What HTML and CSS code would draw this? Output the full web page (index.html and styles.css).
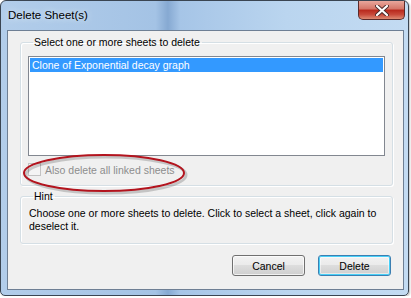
FILE: index.html
```html
<!DOCTYPE html>
<html lang="en">
<head>
    <meta charset="UTF-8">
    <title>Delete Sheet(s)</title>
    <link rel="stylesheet" href="styles.css">
</head>
<body>
    <div class="window">
        <div class="titlebar">
            <div class="title">Delete Sheet(s)</div>
            <div class="close">
                <svg width="14" height="11" viewBox="0 0 14 11">
                    <path d="M2 1 L12 10 M12 1 L2 10" stroke="#4a2a2a" stroke-width="4" stroke-linecap="round"/>
                    <path d="M2 1 L12 10 M12 1 L2 10" stroke="#ffffff" stroke-width="2.2" stroke-linecap="round"/>
                </svg>
            </div>
        </div>

        <div class="client">
            <fieldset class="group sheets">
                <legend>Select one or more sheets to delete</legend>
                <div class="listbox">
                    <div class="item selected">Clone of Exponential decay graph</div>
                </div>
                <label class="check">
                    <span class="box"></span>
                    Also delete all linked sheets
                </label>
            </fieldset>

            <fieldset class="group hint">
                <legend>Hint</legend>
                <p>Choose one or more sheets to delete. Click to select a sheet, click again to deselect it.</p>
            </fieldset>

            <div class="buttons">
                <button class="btn">Cancel</button>
                <button class="btn default">Delete</button>
            </div>

            <!-- annotation drawn over the dialog -->
            <svg class="mark" width="170" height="44" viewBox="0 0 170 44">
                <ellipse cx="84" cy="23" rx="80" ry="18" fill="none" stroke="rgba(0,0,0,0.18)" stroke-width="3"/>
                <ellipse cx="82" cy="21" rx="80" ry="18" fill="none" stroke="#b3141e" stroke-width="2"/>
            </svg>
        </div>
    </div>
</body>
</html>
```

FILE: styles.css
```css
* {
    margin: 0;
    padding: 0;
    box-sizing: border-box;
}

body {
    background: #ffffff;
    font-family: 'Liberation Sans', Arial, sans-serif;
    font-size: 10.5px;
    color: #000;
}

.window {
    position: relative;
    width: 409px;
    height: 296px;
    display: flex;
    flex-direction: column;
    padding: 0 4px 5px 6px;
    border: 1px solid #3a4552;
    border-radius: 6px 6px 5px 5px;
    background: linear-gradient(90deg, #b2cdea 0%, #a4c3e5 38%, #86a9d2 41%, #a6c5e7 44%, #bad5ef 70%, #c3dbf2 100%);
    box-shadow: 1px 1px 2px rgba(0,0,0,0.25);
}

.titlebar {
    height: 29px;
    display: flex;
    justify-content: space-between;
    align-items: flex-start;
}

.title {
    font-size: 11.5px;
    color: #000;
    padding: 8px 0 0 1px;
    text-shadow: 0 0 6px #e8f2fc;
}

.close {
    width: 47px;
    height: 19px;
    margin-right: -1px;
    display: flex;
    align-items: center;
    justify-content: center;
    border: 1px solid #5a2a2a;
    border-top: none;
    border-radius: 0 0 5px 5px;
    background: linear-gradient(#e8a79c 0%, #d47466 45%, #b8281c 50%, #c8493a 75%, #dd8a72 100%);
}

.client {
    position: relative;
    flex: 1;
    background: #f0f0f0;
    border: 1px solid #6e7f94;
    padding: 5px 10px 0 12px;
}

.group {
    border: 1px solid #d5dfe5;
    border-radius: 3px;
    box-shadow: inset 1px 1px 0 #ffffff, 1px 1px 0 #ffffff;
    padding: 0 7px 0 7px;
}

.group legend {
    margin-left: 5px;
    padding: 0 2px 0 1px;
    line-height: 13px;
}

.sheets {
    height: 150px;
    padding-top: 7px;
}

.listbox {
    height: 100px;
    background: #fff;
    border: 1px solid #828790;
    padding: 1px;
}

.item {
    height: 14px;
    line-height: 14px;
    padding-left: 2px;
}

.item.selected {
    background: #3399ff;
    color: #fff;
}

.check {
    display: flex;
    align-items: center;
    gap: 4px;
    margin-top: 7px;
    color: #8d8d8d;
}

.box {
    width: 13px;
    height: 13px;
    border: 1px solid #c3c3c3;
    background: #f4f4f4;
}

.hint {
    margin-top: 4px;
    height: 54px;
    padding-top: 4px;
}

.hint p {
    line-height: 13px;
    padding-left: 1px;
}

.buttons {
    display: flex;
    justify-content: flex-end;
    gap: 13px;
    margin-top: 11px;
    padding-right: 2px;
}

.btn {
    width: 73px;
    height: 21px;
    font-family: inherit;
    font-size: 10.5px;
    color: #000;
    border: 1px solid #707070;
    border-radius: 3px;
    background: linear-gradient(#f2f2f2 0%, #ebebeb 45%, #dddddd 50%, #cfcfcf 100%);
    box-shadow: inset 0 0 0 1px rgba(255,255,255,0.7);
}

.btn.default {
    border-color: #3c7fb1;
    box-shadow: inset 0 0 0 1px #48d0f8, inset 0 0 0 2px rgba(255,255,255,0.5);
}

.mark {
    position: absolute;
    left: 14px;
    top: 121px;
}
```
